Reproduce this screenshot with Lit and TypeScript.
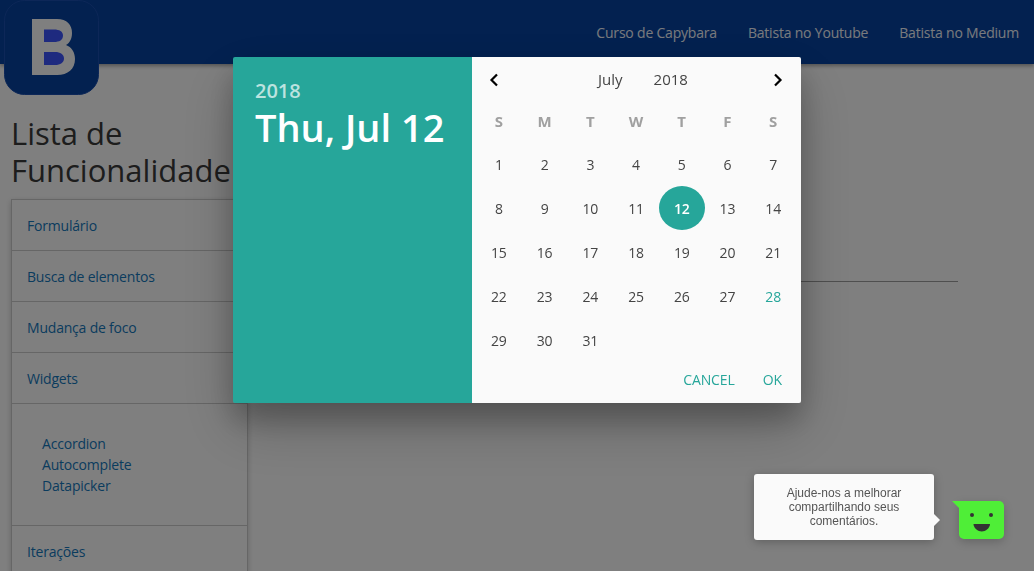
import { LitElement, html, css } from 'lit';
import { customElement } from 'lit/decorators.js';
import { classMap } from 'lit/directives/class-map.js';

const FONT = css`"Open Sans", "Noto Sans", sans-serif`;

@customElement('date-modal')
export class DateModal extends LitElement {
  static styles = css`
    :host {
      position: fixed;
      inset: 0;
      display: flex;
      justify-content: center;
      align-items: flex-start;
      padding-top: 57px;
      box-sizing: border-box;
      background: rgba(0, 0, 0, 0.5);
      font-family: ${FONT};
      z-index: 10;
    }
    .modal {
      width: 568px;
      height: 346px;
      display: flex;
      border-radius: 2px;
      overflow: hidden;
      box-shadow: 0 16px 28px rgba(0, 0, 0, 0.22), 0 25px 55px rgba(0, 0, 0, 0.21);
    }
    .side {
      width: 239px;
      background: #26a69a;
      color: #fff;
      padding: 20px 22px;
      box-sizing: border-box;
    }
    .year {
      font-size: 20px;
      font-weight: 600;
      line-height: 27px;
      color: rgba(255, 255, 255, 0.7);
    }
    .date {
      font-size: 38px;
      font-weight: 600;
      line-height: 47px;
      white-space: nowrap;
    }
    .cal {
      flex: 1;
      background: #fafafa;
      padding: 0 5px 0 4px;
      display: flex;
      flex-direction: column;
    }
    .head {
      height: 45px;
      display: flex;
      align-items: center;
      justify-content: space-between;
      padding: 0 12px;
    }
    .head svg { width: 12px; height: 14px; display: block; }
    .title {
      display: flex;
      gap: 31px;
      margin: 0 0 2px 14px;
      font-size: 15px;
      color: #444;
    }
    .weekdays {
      display: grid;
      grid-template-columns: repeat(7, 1fr);
      height: 38px;
      margin-bottom: 2px;
    }
    .weekdays > div {
      display: flex;
      align-items: center;
      justify-content: center;
      font-size: 15px;
      font-weight: 700;
      color: #a0a0a0;
    }
    .grid {
      display: grid;
      grid-template-columns: repeat(7, 1fr);
      grid-auto-rows: 44px;
      font-size: 14px;
      letter-spacing: -0.2px;
      color: #444;
    }
    .grid > div {
      display: flex;
      align-items: center;
      justify-content: center;
    }
    .grid > .selected {
      background: #26a69a;
      color: #fff;
      border-radius: 50%;
      font-weight: 600;
    }
    .grid > .today { color: #26a69a; }
    .actions {
      display: flex;
      justify-content: flex-end;
      gap: 28px;
      padding: 8px 14px 0 0;
      font-size: 14px;
      letter-spacing: -0.1px;
      color: #26a69a;
    }
  `;

  render() {
    const cells = [];
    for (let i = 1; i <= 31; i++) cells.push(i);
    return html`
      <div class="modal">
        <div class="side">
          <div class="year">2018</div>
          <div class="date">Thu, Jul 12</div>
        </div>
        <div class="cal">
          <div class="head">
            <svg viewBox="0 0 12 14"><path d="M9 1.5L3.5 7L9 12.5" fill="none" stroke="#000" stroke-width="2.2"/></svg>
            <div class="title"><span>July</span><span>2018</span></div>
            <svg viewBox="0 0 12 14"><path d="M3 1.5L8.5 7L3 12.5" fill="none" stroke="#000" stroke-width="2.2"/></svg>
          </div>
          <div class="weekdays">
            ${['S', 'M', 'T', 'W', 'T', 'F', 'S'].map((d) => html`<div>${d}</div>`)}
          </div>
          <div class="grid">
            ${cells.map(
              (n) => html`<div class=${classMap({ selected: n === 12, today: n === 28 })}>${n}</div>`
            )}
          </div>
          <div class="actions"><span>CANCEL</span><span>OK</span></div>
        </div>
      </div>
    `;
  }
}

@customElement('feedback-bot')
export class FeedbackBot extends LitElement {
  static styles = css`
    :host {
      position: fixed;
      right: 30px;
      bottom: 31px;
      display: flex;
      align-items: flex-start;
      z-index: 20;
    }
    .tip {
      position: relative;
      width: 180px;
      height: 66px;
      box-sizing: border-box;
      padding: 12px 20px;
      margin-right: 25px;
      background: #fafafa;
      border-radius: 3px;
      box-shadow: 0 2px 10px rgba(0, 0, 0, 0.25);
      font: 12px/14px "Liberation Sans", Arial, sans-serif;
      color: #555;
      text-align: center;
    }
    .tip::after {
      content: "";
      position: absolute;
      right: -6px;
      top: 40px;
      width: 0;
      height: 0;
      border-left: 6px solid #fafafa;
      border-top: 6px solid transparent;
      border-bottom: 6px solid transparent;
    }
    .bot {
      position: relative;
      margin-top: 27px;
      width: 45px;
      height: 38px;
      background: #4fee37;
      border-radius: 0 5px 5px 5px;
      box-shadow: 0 3px 10px rgba(0, 0, 0, 0.2);
    }
    .bot svg { display: block; position: absolute; left: -7px; top: 0; }
  `;

  render() {
    return html`
      <div class="tip">Ajude-nos a melhorar compartilhando seus comentários.</div>
      <div class="bot">
        <svg width="52" height="38" viewBox="0 0 52 38">
          <path d="M0 0H8V8Z" fill="#4fee37"/>
          <circle cx="20" cy="14" r="2" fill="#333"/>
          <circle cx="39" cy="14" r="2" fill="#333"/>
          <path d="M21.5 23H38C38 27 33.5 30.5 29.7 30.5C26 30.5 21.5 27 21.5 23Z" fill="#333"/>
        </svg>
      </div>
    `;
  }
}

@customElement('app-root')
export class AppRoot extends LitElement {
  static styles = css`
    :host {
      display: block;
      height: 100vh;
      overflow: hidden;
      background: #fff;
      font-family: ${FONT};
    }
    header {
      position: relative;
      height: 64px;
      background: #0642a0;
      box-shadow: 0 2px 4px rgba(0, 0, 0, 0.35);
      display: flex;
      justify-content: flex-end;
      align-items: center;
      gap: 31px;
      padding-right: 15px;
      font-size: 14px;
      letter-spacing: -0.2px;
      color: #f2f5fb;
    }
    .logo {
      position: absolute;
      left: 4px;
      top: 0;
      width: 95px;
      height: 95px;
      display: block;
    }
    main {
      display: grid;
      grid-template-columns: 237px 1fr;
      gap: 22px;
      padding: 0 76px 0 11px;
    }
    h1 {
      margin: 51px 0 10px;
      font-size: 31px;
      font-weight: 400;
      line-height: 37px;
      color: #3a3a3a;
      white-space: nowrap;
    }
    nav {
      border: 1px solid #ccc;
      border-bottom: 0;
      box-shadow: 0 2px 6px rgba(0, 0, 0, 0.2);
      font-size: 14px;
      letter-spacing: -0.2px;
      color: #1578bc;
    }
    .item {
      height: 50px;
      display: flex;
      align-items: center;
      padding-left: 15px;
      border-bottom: 1px solid #ccc;
    }
    .sub {
      padding: 29px 30px;
      border-bottom: 1px solid #ccc;
      line-height: 21px;
    }
    .field {
      margin-top: 217px;
      border-bottom: 1px solid #9e9e9e;
    }
  `;

  render() {
    return html`
      <header>
        <span>Curso de Capybara</span>
        <span>Batista no Youtube</span>
        <span>Batista no Medium</span>
        <svg class="logo" viewBox="0 0 95 95">
          <rect x="0.5" y="0.5" width="94" height="94" rx="20" fill="#0642a0" stroke="#1a4fb0"/>
          <path fill="#fff" d="M28 19H53C63 19 68 25 68 33C68 39 65.5 43 62 45C67.5 47 71 52 71 59C71 69 64 75 53 75H28Z"/>
          <path fill="#3c54ff" d="M40 29.5V42H50C55.5 42 59 40 59 35.5C59 31.5 55.5 29.5 50 29.5ZM40 52V65H51C56.5 65 60 62.5 60 58.5C60 54.5 56.5 52 51 52Z"/>
        </svg>
      </header>
      <main>
        <div>
          <h1>Lista de<br />Funcionalidade</h1>
          <nav>
            <div class="item">Formulário</div>
            <div class="item">Busca de elementos</div>
            <div class="item">Mudança de foco</div>
            <div class="item">Widgets</div>
            <div class="sub">
              <div>Accordion</div>
              <div>Autocomplete</div>
              <div>Datapicker</div>
            </div>
            <div class="item">Iterações</div>
          </nav>
        </div>
        <div><div class="field"></div></div>
      </main>
      <date-modal></date-modal>
      <feedback-bot></feedback-bot>
    `;
  }
}
